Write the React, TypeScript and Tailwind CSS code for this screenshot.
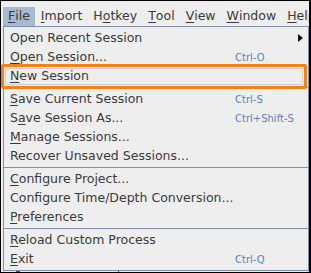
import React from "react";

type Item =
  | { kind: "item"; label: string; mn?: number; shortcut?: string; submenu?: boolean }
  | { kind: "sep" };

const menus: { label: string; mn: number }[] = [
  { label: "File", mn: 0 },
  { label: "Import", mn: 0 },
  { label: "Hotkey", mn: 1 },
  { label: "Tool", mn: 0 },
  { label: "View", mn: 0 },
  { label: "Window", mn: 0 },
  { label: "Help", mn: 0 },
];

const items: Item[] = [
  { kind: "item", label: "Open Recent Session", submenu: true },
  { kind: "item", label: "Open Session...", mn: 0, shortcut: "Ctrl-O" },
  { kind: "item", label: "New Session", mn: 0 },
  { kind: "sep" },
  { kind: "item", label: "Save Current Session", mn: 0, shortcut: "Ctrl-S" },
  { kind: "item", label: "Save Session As...", mn: 1, shortcut: "Ctrl+Shift-S" },
  { kind: "item", label: "Manage Sessions...", mn: 0 },
  { kind: "item", label: "Recover Unsaved Sessions..." },
  { kind: "sep" },
  { kind: "item", label: "Configure Project...", mn: 0 },
  { kind: "item", label: "Configure Time/Depth Conversion..." },
  { kind: "item", label: "Preferences", mn: 0 },
  { kind: "sep" },
  { kind: "item", label: "Reload Custom Process", mn: 0 },
  { kind: "item", label: "Exit", mn: 0, shortcut: "Ctrl-Q" },
];

function Mnemonic({ text, index }: { text: string; index?: number }) {
  if (index === undefined) return <>{text}</>;
  return (
    <>
      {text.slice(0, index)}
      <span className="underline underline-offset-[2px]">{text[index]}</span>
      {text.slice(index + 1)}
    </>
  );
}

export default function App() {
  return (
    <div
      className="relative h-[273px] w-[311px] overflow-hidden border-t border-l border-b border-r-2 border-black bg-[#eeeeee] text-[12.5px] text-[#3a3a3a]"
      style={{ fontFamily: '"DejaVu Sans", sans-serif' }}
    >
      {/* menu bar */}
      <div className="flex h-[25px] items-end pl-[2px]">
        {menus.map((m, i) => (
          <div
            key={m.label}
            className={`flex h-[19px] items-center px-[5px] mr-[1px] whitespace-nowrap ${
              i === 0 ? "bg-[#a6b9cf]" : ""
            }`}
          >
            <Mnemonic text={m.label} index={m.mn} />
          </div>
        ))}
      </div>

      {/* window content behind the menu */}
      <div className="flex h-[246px] items-end">
        <div className="ml-[15px] h-[4px] w-[4px] bg-[#555555]" />
        <div className="ml-[98px] h-[4px] w-px bg-[#555555]" />
      </div>

      {/* File popup */}
      <div className="absolute left-[2px] top-[25px] w-[306px] border border-[#7f8fae] bg-[#eeeeee] pt-[2px] pb-[1px]">
        {items.map((it, i) =>
          it.kind === "sep" ? (
            <div key={i} className="h-[4px] pt-[1px]">
              <div className="h-px bg-[#7f8fae]" />
            </div>
          ) : (
            <div key={i} className="flex h-[19px] items-center pl-[6px] pr-[5px] whitespace-nowrap">
              <div className="w-[225px]">
                <Mnemonic text={it.label} index={it.mn} />
              </div>
              <div className="flex-1 text-[10px] text-[#5b7ec0]">{it.shortcut}</div>
              {it.submenu && (
                <svg width="5" height="8" viewBox="0 0 5 8" className="mb-px">
                  <path d="M0 0 L5 4 L0 8 Z" fill="#111111" />
                </svg>
              )}
            </div>
          )
        )}
      </div>

      {/* highlight annotation */}
      <div className="absolute left-0 top-[63px] h-[25px] w-[306px] rounded-[2px] border-[3px] border-[#f58214] p-px">
        <div className="h-full w-full border border-[#cfcfcf]" />
      </div>
    </div>
  );
}
